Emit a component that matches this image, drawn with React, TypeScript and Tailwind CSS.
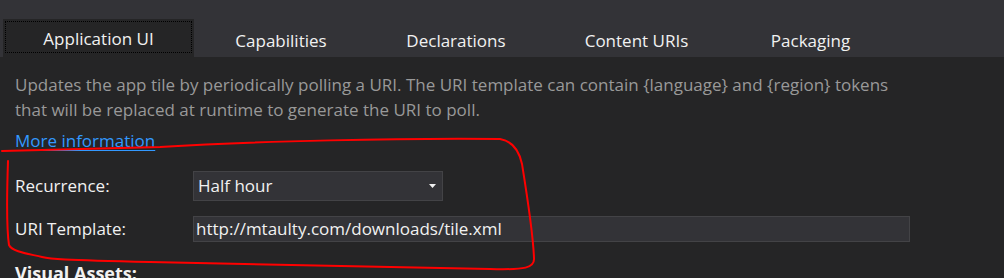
import React from 'react';

const tabs = [
  { label: 'Application UI', width: 'w-[191px]', active: true },
  { label: 'Capabilities', width: 'w-[174px]', active: false },
  { label: 'Declarations', width: 'w-[176px]', active: false },
  { label: 'Content URIs', width: 'w-[185px]', active: false },
  { label: 'Packaging', width: 'w-[163px]', active: false },
];

const fontStack = { fontFamily: '"Open Sans", "Noto Sans", sans-serif' };

const App: React.FC = () => {
  return (
    <div className="relative w-[1004px] h-[278px] overflow-hidden bg-[#252526] text-[17px] text-[#f1f1f1]" style={fontStack}>
      {/* Tab strip */}
      <div className="h-[57px] bg-[#333337] flex items-end pl-[3px]">
        {tabs.map((t) => (
          <div
            key={t.label}
            className={`${t.width} h-[38px] flex items-center justify-center ${t.active ? 'bg-[#252526]' : ''}`}
          >
            {t.active ? (
              <div className="mx-[2px] mt-[2px] mb-[4px] w-full h-[32px] border border-dotted border-black flex items-center justify-center pt-[3px]">
                {t.label}
              </div>
            ) : (
              <span className="pt-[5px]">{t.label}</span>
            )}
          </div>
        ))}
      </div>

      {/* Content */}
      <div className="pl-[15px] pt-[15px]">
        <p className="text-[#999999] leading-[25px] whitespace-nowrap">
          Updates the app tile by periodically polling a URI. The URI template can contain {'{language}'} and {'{region}'} tokens
          <br />
          that will be replaced at runtime to generate the URI to poll.
        </p>
        <a className="block mt-[6px] leading-[25px] text-[#3399ff] underline underline-offset-[3px] w-fit">More information</a>

        <div className="mt-[18px] flex items-center h-[30px]">
          <span className="w-[178px]">Recurrence:</span>
          <div className="w-[250px] h-[30px] bg-[#333337] border border-[#434346] flex items-center justify-between pl-[4px] pr-[6px]">
            <span>Half hour</span>
            <svg width="7" height="4" viewBox="0 0 7 4">
              <path d="M0 0 L7 0 L3.5 4 Z" fill="#f1f1f1" />
            </svg>
          </div>
        </div>

        <div className="mt-[15px] flex items-center h-[26px]">
          <span className="w-[178px]">URI Template:</span>
          <div className="w-[717px] h-[26px] bg-[#333337] border border-[#434346] flex items-center pl-[2px]">
            http://mtaulty.com/downloads/tile.xml
          </div>
        </div>

        <div className="mt-[19px] font-bold text-[18px] leading-[25px]">Visual Assets:</div>
      </div>

      {/* Red hand-drawn annotation */}
      <svg className="absolute left-0 top-0 pointer-events-none" width="1004" height="278" viewBox="0 0 1004 278" fill="none">
        <path
          d="M2 151 C60 150 110 148 160 147 C260 141 400 138 500 139 C512 141 519 150 522 164 C527 195 533 232 534 258 C535 268 525 270 490 269 L150 262 C60 260 50 259 42 257 C30 254 12 252 9 245 C6 225 7 190 8 161"
          stroke="#ff0000"
          strokeWidth="2"
          strokeLinecap="round"
        />
      </svg>
    </div>
  );
};

export default App;
